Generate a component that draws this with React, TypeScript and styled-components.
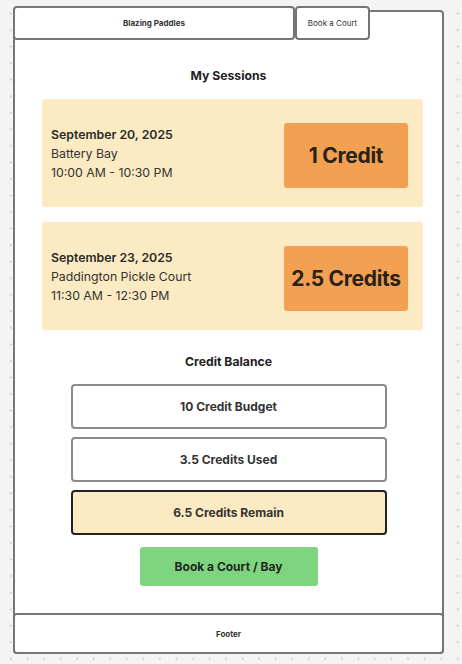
import React from 'react';
import styled, { createGlobalStyle } from 'styled-components';

interface Session {
  date: string;
  place: string;
  time: string;
  credits: string;
}

const sessions: Session[] = [
  {
    date: 'September 20, 2025',
    place: 'Battery Bay',
    time: '10:00 AM - 10:30 PM',
    credits: '1 Credit',
  },
  {
    date: 'September 23, 2025',
    place: 'Paddington Pickle Court',
    time: '11:30 AM - 12:30 PM',
    credits: '2.5 Credits',
  },
];

const balance = [
  { label: '10 Credit Budget', highlight: false },
  { label: '3.5 Credits Used', highlight: false },
  { label: '6.5 Credits Remain', highlight: true },
];

const App: React.FC = () => {
  return (
    <>
      <GlobalStyle />
      <Canvas>
        <Frame>
          <Header>
            <Brand>Blazing Paddles</Brand>
            <NavTab>Book a Court</NavTab>
          </Header>

          <Main>
            <SectionTitle>My Sessions</SectionTitle>
            <SessionList>
              {sessions.map((s) => (
                <SessionCard key={s.date}>
                  <SessionInfo>
                    <SessionDate>{s.date}</SessionDate>
                    <div>{s.place}</div>
                    <div>{s.time}</div>
                  </SessionInfo>
                  <CreditBadge>{s.credits}</CreditBadge>
                </SessionCard>
              ))}
            </SessionList>

            <SectionTitle $top={24}>Credit Balance</SectionTitle>
            <BalanceList>
              {balance.map((b) => (
                <BalanceBox key={b.label} $highlight={b.highlight}>
                  {b.label}
                </BalanceBox>
              ))}
            </BalanceList>

            <BookButton>Book a Court / Bay</BookButton>
          </Main>

          <Footer>Footer</Footer>
        </Frame>
      </Canvas>
    </>
  );
};

// Styles
const GlobalStyle = createGlobalStyle`
  html, body {
    margin: 0;
    padding: 0;
  }
  body {
    font-family: Inter, 'Noto Sans', sans-serif;
    color: #2a2a2a;
    background-color: #f4f4f4;
    background-image: radial-gradient(circle, #c4c4c4 0.8px, transparent 1.2px);
    background-size: 16.55px 16.55px;
    background-position: 2.7px 5.2px;
  }
  * {
    box-sizing: border-box;
  }
`;

const Canvas = styled.div`
  width: 462px;
  height: 664px;
  padding: 10px 0 0 13px;
`;

const Frame = styled.div`
  width: 431px;
  height: 644px;
  display: flex;
  flex-direction: column;
  background: #fff;
  border: 2px solid #767676;
  border-radius: 4px;
`;

const Header = styled.div`
  display: flex;
  margin: -6px 0 0 -2px;
`;

const HeaderBox = styled.div`
  height: 34px;
  display: flex;
  align-items: center;
  justify-content: center;
  background: #fff;
  border: 2px solid #767676;
  border-radius: 4px;
  font-size: 8px;
  color: #333;
`;

const Brand = styled(HeaderBox)`
  width: 282px;
  font-weight: 700;
`;

const NavTab = styled(HeaderBox)`
  width: 75px;
  font-weight: 400;
`;

const Main = styled.main`
  flex: 1;
  display: flex;
  flex-direction: column;
  align-items: center;
  padding-top: 28px;
`;

const SectionTitle = styled.h2<{ $top?: number }>`
  margin: ${(p) => p.$top ?? 0}px 0 15px;
  font-size: 12.2px;
  line-height: 16px;
  font-weight: 700;
  color: #222;
`;

const SessionList = styled.div`
  align-self: stretch;
  display: flex;
  flex-direction: column;
  gap: 15px;
  padding: 0 19px 0 27px;
`;

const SessionCard = styled.div`
  height: 108px;
  display: flex;
  align-items: center;
  justify-content: space-between;
  padding: 0 15px 0 9px;
  background: #fbeac2;
  border-radius: 3px;
`;

const SessionInfo = styled.div`
  font-size: 12.3px;
  line-height: 19px;
  color: #333;
`;

const SessionDate = styled.div`
  font-weight: 600;
  color: #2a2a2a;
`;

const CreditBadge = styled.div`
  width: 124px;
  height: 65px;
  margin-top: 4px;
  display: flex;
  align-items: center;
  justify-content: center;
  background: #f2a153;
  border-radius: 3px;
  font-size: 21px;
  font-weight: 700;
  letter-spacing: -0.3px;
  color: #2a2216;
`;

const BalanceList = styled.div`
  display: flex;
  flex-direction: column;
  gap: 8px;
  margin-top: -1px;
`;

const BalanceBox = styled.div<{ $highlight: boolean }>`
  width: 316px;
  height: 45px;
  display: flex;
  align-items: center;
  justify-content: center;
  background: ${(p) => (p.$highlight ? '#fbeac2' : '#fff')};
  border: 2px solid ${(p) => (p.$highlight ? '#222' : '#8a8a8a')};
  border-radius: 4px;
  font-size: 12px;
  font-weight: 700;
  color: #333;
`;

const BookButton = styled.button`
  margin-top: 12px;
  width: 178px;
  height: 39px;
  border: none;
  border-radius: 3px;
  background: #7fd47f;
  font-family: inherit;
  font-size: 12px;
  font-weight: 700;
  color: #1f2a1f;
`;

const Footer = styled.footer`
  height: 41px;
  margin: 0 -2px -2px;
  display: flex;
  align-items: center;
  justify-content: center;
  background: #fff;
  border: 2px solid #767676;
  border-radius: 4px;
  font-size: 8px;
  font-weight: 700;
  color: #333;
`;

export default App;
